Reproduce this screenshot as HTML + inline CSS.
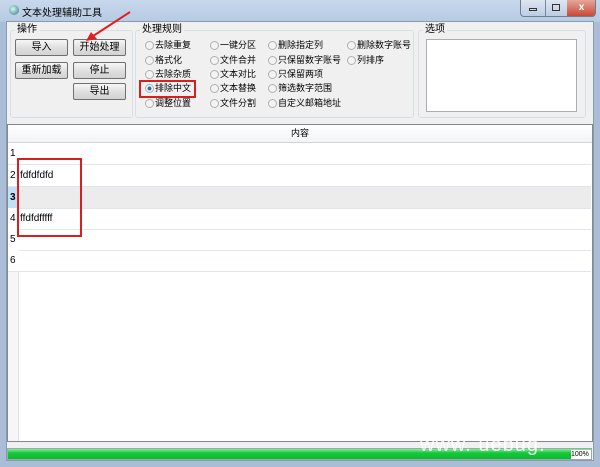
<!DOCTYPE html><html><head><meta charset="utf-8"><style>
*{margin:0;padding:0;box-sizing:border-box}
body{width:600px;height:467px;overflow:hidden;background:#a9bdd6;font-family:"Liberation Sans","Noto Sans CJK SC",sans-serif;font-size:10px;color:#000;position:relative}
.a{position:absolute}
.btn{position:absolute;width:53px;height:17px;border:1px solid #707070;border-radius:2px;background:linear-gradient(#f6f6f6,#e0e0e0 50%,#d2d2d2);text-align:center;line-height:15px;font-size:10px}
.gb{position:absolute;border:1px solid #d5dfe5;border-radius:3px}
.gl{position:absolute;background:#f0f0f0;padding:0 2px;font-size:10px;top:-8px;left:4px;line-height:14px}
.r{position:absolute;font-size:9px;line-height:13px;white-space:nowrap}
.r i{position:absolute;left:-10px;top:2px;width:9px;height:9px;border:1px solid #b0b0b0;border-radius:50%;background:#f3f3f3}
.row{position:absolute;left:8px;width:583px;border-bottom:1px solid #dfe6ee;height:22px}
.n{position:absolute;left:0;width:11px;height:100%;text-align:left;padding-left:2px;line-height:22px;font-size:10px;background:#fff}
</style></head><body>
<div class="a" style="left:0;top:0;width:600px;height:22px;background:linear-gradient(#c7d8ec,#b6cae2)"></div>
<div class="a" style="left:9px;top:5px;width:10px;height:10px;border-radius:50%;background:radial-gradient(circle at 40% 40%,#cfe,#3a6a8a)"></div>
<div class="a" style="left:22px;top:4px;font-size:10px">文本处理辅助工具</div>
<div class="a" style="left:520px;top:0;width:76px;height:17px;border:1px solid #6c7d94;border-top:none;border-radius:0 0 4px 4px;background:linear-gradient(#dde6f2,#bccde2);overflow:hidden">
<div class="a" style="left:24px;top:0;width:1px;height:17px;background:#7788a0"></div>
<div class="a" style="left:46px;top:0;width:29px;height:17px;background:linear-gradient(#e4a79a,#c8432f);color:#fff;text-align:center;font-weight:bold;line-height:15px">x</div>
<div class="a" style="left:8px;top:8px;width:8px;height:3px;border:1px solid #333"></div>
<div class="a" style="left:31px;top:4px;width:8px;height:7px;border:1px solid #333"></div>
</div>
<div class="a" style="left:6px;top:21px;width:588px;height:440px;background:#f0f0f0;border:1px solid #8a9bb0"></div>

<div class="gb" style="left:10px;top:30px;width:123px;height:88px"><span class="gl">操作</span></div>
<div class="btn" style="left:15px;top:39px">导入</div>
<div class="btn" style="left:73px;top:39px">开始处理</div>
<div class="btn" style="left:15px;top:62px">重新加载</div>
<div class="btn" style="left:73px;top:62px">停止</div>
<div class="btn" style="left:73px;top:83px">导出</div>

<div class="gb" style="left:135px;top:30px;width:279px;height:88px"><span class="gl">处理规则</span></div>
<div class="r" style="left:155px;top:39px"><i></i>去除重复</div>
<div class="r" style="left:155px;top:54px"><i></i>格式化</div>
<div class="r" style="left:155px;top:68px"><i></i>去除杂质</div>
<div class="r" style="left:155px;top:82px"><i style="background:radial-gradient(#2a6db0 35%,#f3f3f3 45%)"></i>排除中文</div>
<div class="r" style="left:155px;top:97px"><i></i>调整位置</div>
<div class="r" style="left:220px;top:39px"><i></i>一键分区</div>
<div class="r" style="left:220px;top:54px"><i></i>文件合并</div>
<div class="r" style="left:220px;top:68px"><i></i>文本对比</div>
<div class="r" style="left:220px;top:82px"><i></i>文本替换</div>
<div class="r" style="left:220px;top:97px"><i></i>文件分割</div>
<div class="r" style="left:278px;top:39px"><i></i>删除指定列</div>
<div class="r" style="left:278px;top:54px"><i></i>只保留数字账号</div>
<div class="r" style="left:278px;top:68px"><i></i>只保留两项</div>
<div class="r" style="left:278px;top:82px"><i></i>筛选数字范围</div>
<div class="r" style="left:278px;top:97px"><i></i>自定义邮箱地址</div>
<div class="r" style="left:357px;top:39px"><i></i>删除数字账号</div>
<div class="r" style="left:357px;top:54px"><i></i>列排序</div>
<div class="a" style="left:139px;top:80px;width:57px;height:18px;border:2px solid #d81e1e"></div>

<div class="gb" style="left:418px;top:30px;width:168px;height:88px"><span class="gl">选项</span></div>
<div class="a" style="left:426px;top:39px;width:151px;height:73px;background:#fff;border:1px solid #abadb3"></div>

<div class="a" style="left:7px;top:124px;width:586px;height:318px;background:#fff;border:1px solid #828790"></div>
<div class="a" style="left:8px;top:125px;width:584px;height:18px;background:linear-gradient(#fff,#f2f4f7);border-bottom:1px solid #d5d5d5;text-align:center;line-height:17px;font-size:9px">内容</div>
<div class="a" style="left:8px;top:143px;width:11px;height:298px;background:#f6f6f6;border-right:1px solid #e0e0e0"></div>
<div class="row" style="top:143px"><div class="n">1</div></div>
<div class="row" style="top:165px"><div class="n">2</div><span class="a" style="left:12px;top:5px">fdfdfdfd</span></div>
<div class="row" style="top:187px;background:#ececec"><div class="n" style="background:#bfe0f5;font-weight:bold">3</div></div>
<div class="row" style="top:208px"><div class="n">4</div><span class="a" style="left:12px;top:5px">ffdfdfffff</span></div>
<div class="row" style="top:229px"><div class="n">5</div></div>
<div class="row" style="top:250px"><div class="n">6</div></div>
<div class="a" style="left:17px;top:158px;width:65px;height:79px;border:2px solid #d81e1e"></div>

<div class="a" style="left:7px;top:448px;width:585px;height:12px;border:1px solid #9aa;background:linear-gradient(#8ee89a,#12c83a 40%,#10b830)"></div>
<div class="a" style="left:571px;top:450px;width:20px;height:9px;background:#fff;font-size:7px;line-height:9px">100%</div>
<div class="a" style="left:420px;top:434px;font-size:20px;color:#fff;letter-spacing:1px;opacity:.85">www. uebug.</div>

<svg class="a" style="left:0;top:0" width="600" height="140"><path d="M130 12 L90 38" stroke="#e02020" stroke-width="2"/><path d="M86 41 L97 39 L91 32 Z" fill="#e02020"/></svg>
</body></html>
